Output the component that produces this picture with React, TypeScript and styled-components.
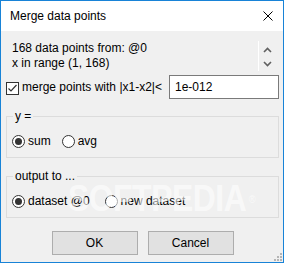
import React from 'react';
import styled, { createGlobalStyle } from 'styled-components';

const GlobalStyle = createGlobalStyle`
  html, body {
    margin: 0;
    padding: 0;
    background: #f0f0f0;
  }
  body {
    font-family: 'Liberation Sans', Arial, sans-serif;
    font-size: 12px;
    color: #000;
  }
`;

const Window = styled.div`
  position: relative;
  box-sizing: border-box;
  width: 284px;
  height: 263px;
  border: 1px solid #1883d7;
  background: #f0f0f0;
  display: flex;
  flex-direction: column;
  overflow: hidden;
`;

const TitleBar = styled.div`
  height: 30px;
  flex: none;
  background: #fff;
  display: flex;
  align-items: center;
  justify-content: space-between;
  padding: 0 10px 0 9px;
  font-size: 12px;
  line-height: 15px;
`;

const Body = styled.div`
  display: flex;
  flex-direction: column;
  padding: 0 4px 0 5px;
  flex: 1;
`;

const InfoArea = styled.div`
  display: flex;
  height: 30px;
  margin-top: 10px;
`;

const InfoText = styled.div`
  flex: 1;
  padding-left: 6px;
  line-height: 15px;
`;

const ScrollBar = styled.div`
  width: 17px;
  margin-right: 4px;
  border-left: 1px solid #fff;
  display: flex;
  flex-direction: column;
  align-items: center;
  justify-content: space-between;
  padding: 6px 0 4px;
  box-sizing: border-box;
`;

const CheckRow = styled.div`
  display: flex;
  align-items: center;
  height: 24px;
  margin-top: 4px;
`;

const CheckBox = styled.span`
  box-sizing: border-box;
  width: 13px;
  height: 13px;
  border: 1px solid #333;
  background: #fff;
  display: inline-flex;
  align-items: center;
  justify-content: center;
  margin-top: 2px;
`;

const CheckLabel = styled.span`
  margin-left: 3px;
  line-height: 15px;
`;

const Input = styled.div`
  box-sizing: border-box;
  margin-left: auto;
  width: 110px;
  height: 24px;
  border: 1px solid #7a7a7a;
  background: #fff;
  padding: 0 5px;
  display: flex;
  align-items: center;
  line-height: 15px;
`;

const Group = styled.fieldset<{ $top: number }>`
  margin: ${(p) => p.$top}px 0 0;
  padding: 10px 5px 8px;
  border: 1px solid #dcdcdc;
  min-width: 0;
`;

const Legend = styled.legend`
  padding: 0 2px;
  margin-left: 1px;
  line-height: 15px;
`;

const RadioRow = styled.div<{ $spacing: number }>`
  display: flex;
  align-items: center;
  height: 15px;
  gap: ${(p) => p.$spacing}px;
`;

const RadioItem = styled.label`
  display: flex;
  align-items: center;
  line-height: 15px;
`;

const RadioCircle = styled.span<{ $checked?: boolean }>`
  box-sizing: border-box;
  width: 13px;
  height: 13px;
  border-radius: 50%;
  border: 1px solid #333;
  background: #fff;
  display: inline-flex;
  align-items: center;
  justify-content: center;
  margin-right: 3px;

  &::after {
    content: '';
    width: 7px;
    height: 7px;
    border-radius: 50%;
    background: ${(p) => (p.$checked ? '#333' : 'transparent')};
  }
`;

const ButtonRow = styled.div`
  display: flex;
  justify-content: center;
  gap: 10px;
  margin-top: 13px;
`;

const Button = styled.div`
  box-sizing: border-box;
  width: 86px;
  height: 24px;
  background: #e1e1e1;
  border: 1px solid #adadad;
  display: flex;
  align-items: center;
  justify-content: center;
  line-height: 15px;
`;

// faint watermark lying over the second group
const Watermark = styled.div`
  position: absolute;
  left: 67px;
  top: 178px;
  font-family: 'Liberation Sans', Arial, sans-serif;
  font-weight: bold;
  font-size: 37px;
  line-height: 40px;
  color: rgba(255, 255, 255, 0.6);
  transform: scaleX(0.86);
  transform-origin: left top;
  letter-spacing: -0.5px;
  pointer-events: none;
  white-space: nowrap;

  sup {
    font-size: 11px;
    font-weight: normal;
    vertical-align: top;
    margin-left: 3px;
  }
`;

const Grip = styled.svg`
  position: absolute;
  right: 1px;
  bottom: 1px;
`;

const Chevron = ({ up }: { up?: boolean }) => (
  <svg width="9" height="6" viewBox="0 0 9 6">
    <polyline
      points={up ? '1,5 4.5,1.5 8,5' : '1,1 4.5,4.5 8,1'}
      fill="none"
      stroke="#606060"
      strokeWidth="1.6"
    />
  </svg>
);

const Radio = ({ checked, label }: { checked?: boolean; label: string }) => (
  <RadioItem>
    <RadioCircle $checked={checked} />
    {label}
  </RadioItem>
);

const App = () => {
  return (
    <>
      <GlobalStyle />
      <Window>
        <TitleBar>
          <span>Merge data points</span>
          <svg width="10" height="10" viewBox="0 0 10 10">
            <path d="M0.5 0.5 L9.5 9.5 M9.5 0.5 L0.5 9.5" stroke="#000" strokeWidth="1" />
          </svg>
        </TitleBar>
        <Body>
          <InfoArea>
            <InfoText>
              168 data points from: @0
              <br />
              x in range (1, 168)
            </InfoText>
            <ScrollBar>
              <Chevron up />
              <Chevron />
            </ScrollBar>
          </InfoArea>
          <CheckRow>
            <CheckBox>
              <svg width="11" height="11" viewBox="0 0 11 11">
                <polyline points="1.5,5.5 4,8 9.5,2" fill="none" stroke="#333" strokeWidth="1.2" />
              </svg>
            </CheckBox>
            <CheckLabel>merge points with |x1-x2|&lt;</CheckLabel>
            <Input>1e-012</Input>
          </CheckRow>
          <Group $top={10}>
            <Legend>y =</Legend>
            <RadioRow $spacing={11}>
              <Radio checked label="sum" />
              <Radio label="avg" />
            </RadioRow>
          </Group>
          <Group $top={11}>
            <Legend>output to ...</Legend>
            <RadioRow $spacing={15}>
              <Radio checked label="dataset @0" />
              <Radio label="new dataset" />
            </RadioRow>
          </Group>
          <ButtonRow>
            <Button>OK</Button>
            <Button>Cancel</Button>
          </ButtonRow>
        </Body>
        <Watermark>
          SOFTPEDIA<sup>®</sup>
        </Watermark>
        <Grip width="8" height="8" viewBox="0 0 8 8">
          <g fill="#b5b5b5">
            <rect x="6" y="0" width="2" height="2" />
            <rect x="3" y="3" width="2" height="2" />
            <rect x="6" y="3" width="2" height="2" />
            <rect x="0" y="6" width="2" height="2" />
            <rect x="3" y="6" width="2" height="2" />
            <rect x="6" y="6" width="2" height="2" />
          </g>
        </Grip>
      </Window>
    </>
  );
};

export default App;
